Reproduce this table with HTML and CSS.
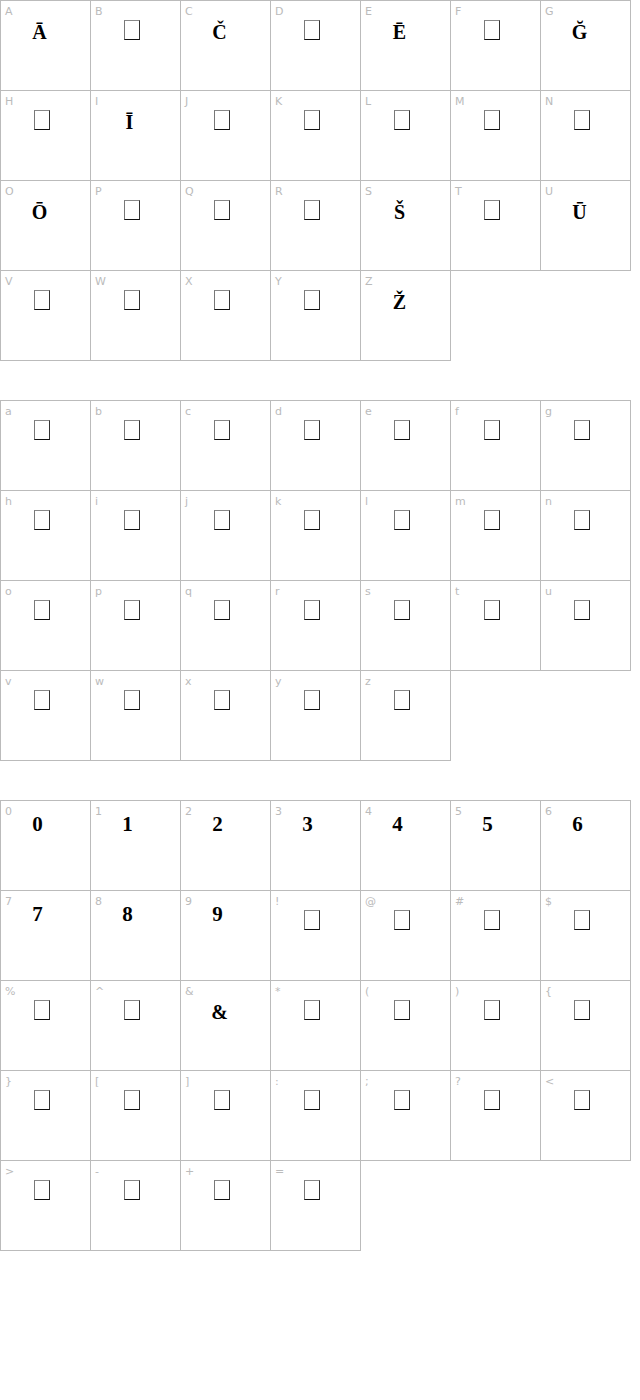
FILE: index.html
```html
<!DOCTYPE html>
<html>
<head>
<meta charset="utf-8">
<link rel="stylesheet" href="styles.css">
</head>
<body>
<div class="grid">
  <div class="cell"><div class="lbl">A</div><div class="gl ch">Ā</div></div>
  <div class="cell"><div class="lbl">B</div><div class="gl"><span class="tofu"></span></div></div>
  <div class="cell"><div class="lbl">C</div><div class="gl ch">Č</div></div>
  <div class="cell"><div class="lbl">D</div><div class="gl"><span class="tofu"></span></div></div>
  <div class="cell"><div class="lbl">E</div><div class="gl ch">Ē</div></div>
  <div class="cell"><div class="lbl">F</div><div class="gl"><span class="tofu"></span></div></div>
  <div class="cell"><div class="lbl">G</div><div class="gl ch">Ğ</div></div>
  <div class="cell"><div class="lbl">H</div><div class="gl"><span class="tofu"></span></div></div>
  <div class="cell"><div class="lbl">I</div><div class="gl ch">Ī</div></div>
  <div class="cell"><div class="lbl">J</div><div class="gl"><span class="tofu"></span></div></div>
  <div class="cell"><div class="lbl">K</div><div class="gl"><span class="tofu"></span></div></div>
  <div class="cell"><div class="lbl">L</div><div class="gl"><span class="tofu"></span></div></div>
  <div class="cell"><div class="lbl">M</div><div class="gl"><span class="tofu"></span></div></div>
  <div class="cell"><div class="lbl">N</div><div class="gl"><span class="tofu"></span></div></div>
  <div class="cell"><div class="lbl">O</div><div class="gl ch">Ō</div></div>
  <div class="cell"><div class="lbl">P</div><div class="gl"><span class="tofu"></span></div></div>
  <div class="cell"><div class="lbl">Q</div><div class="gl"><span class="tofu"></span></div></div>
  <div class="cell"><div class="lbl">R</div><div class="gl"><span class="tofu"></span></div></div>
  <div class="cell"><div class="lbl">S</div><div class="gl ch">Š</div></div>
  <div class="cell"><div class="lbl">T</div><div class="gl"><span class="tofu"></span></div></div>
  <div class="cell"><div class="lbl">U</div><div class="gl ch">Ū</div></div>
  <div class="cell"><div class="lbl">V</div><div class="gl"><span class="tofu"></span></div></div>
  <div class="cell"><div class="lbl">W</div><div class="gl"><span class="tofu"></span></div></div>
  <div class="cell"><div class="lbl">X</div><div class="gl"><span class="tofu"></span></div></div>
  <div class="cell"><div class="lbl">Y</div><div class="gl"><span class="tofu"></span></div></div>
  <div class="cell"><div class="lbl">Z</div><div class="gl ch">Ž</div></div>
</div>

<div class="grid">
  <div class="cell"><div class="lbl">a</div><div class="gl"><span class="tofu"></span></div></div>
  <div class="cell"><div class="lbl">b</div><div class="gl"><span class="tofu"></span></div></div>
  <div class="cell"><div class="lbl">c</div><div class="gl"><span class="tofu"></span></div></div>
  <div class="cell"><div class="lbl">d</div><div class="gl"><span class="tofu"></span></div></div>
  <div class="cell"><div class="lbl">e</div><div class="gl"><span class="tofu"></span></div></div>
  <div class="cell"><div class="lbl">f</div><div class="gl"><span class="tofu"></span></div></div>
  <div class="cell"><div class="lbl">g</div><div class="gl"><span class="tofu"></span></div></div>
  <div class="cell"><div class="lbl">h</div><div class="gl"><span class="tofu"></span></div></div>
  <div class="cell"><div class="lbl">i</div><div class="gl"><span class="tofu"></span></div></div>
  <div class="cell"><div class="lbl">j</div><div class="gl"><span class="tofu"></span></div></div>
  <div class="cell"><div class="lbl">k</div><div class="gl"><span class="tofu"></span></div></div>
  <div class="cell"><div class="lbl">l</div><div class="gl"><span class="tofu"></span></div></div>
  <div class="cell"><div class="lbl">m</div><div class="gl"><span class="tofu"></span></div></div>
  <div class="cell"><div class="lbl">n</div><div class="gl"><span class="tofu"></span></div></div>
  <div class="cell"><div class="lbl">o</div><div class="gl"><span class="tofu"></span></div></div>
  <div class="cell"><div class="lbl">p</div><div class="gl"><span class="tofu"></span></div></div>
  <div class="cell"><div class="lbl">q</div><div class="gl"><span class="tofu"></span></div></div>
  <div class="cell"><div class="lbl">r</div><div class="gl"><span class="tofu"></span></div></div>
  <div class="cell"><div class="lbl">s</div><div class="gl"><span class="tofu"></span></div></div>
  <div class="cell"><div class="lbl">t</div><div class="gl"><span class="tofu"></span></div></div>
  <div class="cell"><div class="lbl">u</div><div class="gl"><span class="tofu"></span></div></div>
  <div class="cell"><div class="lbl">v</div><div class="gl"><span class="tofu"></span></div></div>
  <div class="cell"><div class="lbl">w</div><div class="gl"><span class="tofu"></span></div></div>
  <div class="cell"><div class="lbl">x</div><div class="gl"><span class="tofu"></span></div></div>
  <div class="cell"><div class="lbl">y</div><div class="gl"><span class="tofu"></span></div></div>
  <div class="cell"><div class="lbl">z</div><div class="gl"><span class="tofu"></span></div></div>
</div>

<div class="grid">
  <div class="cell"><div class="lbl">0</div><div class="gl num">0</div></div>
  <div class="cell"><div class="lbl">1</div><div class="gl num">1</div></div>
  <div class="cell"><div class="lbl">2</div><div class="gl num">2</div></div>
  <div class="cell"><div class="lbl">3</div><div class="gl num">3</div></div>
  <div class="cell"><div class="lbl">4</div><div class="gl num">4</div></div>
  <div class="cell"><div class="lbl">5</div><div class="gl num">5</div></div>
  <div class="cell"><div class="lbl">6</div><div class="gl num">6</div></div>
  <div class="cell"><div class="lbl">7</div><div class="gl num">7</div></div>
  <div class="cell"><div class="lbl">8</div><div class="gl num">8</div></div>
  <div class="cell"><div class="lbl">9</div><div class="gl num">9</div></div>
  <div class="cell"><div class="lbl">!</div><div class="gl"><span class="tofu"></span></div></div>
  <div class="cell"><div class="lbl">@</div><div class="gl"><span class="tofu"></span></div></div>
  <div class="cell"><div class="lbl">#</div><div class="gl"><span class="tofu"></span></div></div>
  <div class="cell"><div class="lbl">$</div><div class="gl"><span class="tofu"></span></div></div>
  <div class="cell"><div class="lbl">%</div><div class="gl"><span class="tofu"></span></div></div>
  <div class="cell"><div class="lbl">^</div><div class="gl"><span class="tofu"></span></div></div>
  <div class="cell"><div class="lbl">&amp;</div><div class="gl ch">&amp;</div></div>
  <div class="cell"><div class="lbl">*</div><div class="gl"><span class="tofu"></span></div></div>
  <div class="cell"><div class="lbl">(</div><div class="gl"><span class="tofu"></span></div></div>
  <div class="cell"><div class="lbl">)</div><div class="gl"><span class="tofu"></span></div></div>
  <div class="cell"><div class="lbl">{</div><div class="gl"><span class="tofu"></span></div></div>
  <div class="cell"><div class="lbl">}</div><div class="gl"><span class="tofu"></span></div></div>
  <div class="cell"><div class="lbl">[</div><div class="gl"><span class="tofu"></span></div></div>
  <div class="cell"><div class="lbl">]</div><div class="gl"><span class="tofu"></span></div></div>
  <div class="cell"><div class="lbl">:</div><div class="gl"><span class="tofu"></span></div></div>
  <div class="cell"><div class="lbl">;</div><div class="gl"><span class="tofu"></span></div></div>
  <div class="cell"><div class="lbl">?</div><div class="gl"><span class="tofu"></span></div></div>
  <div class="cell"><div class="lbl">&lt;</div><div class="gl"><span class="tofu"></span></div></div>
  <div class="cell"><div class="lbl">&gt;</div><div class="gl"><span class="tofu"></span></div></div>
  <div class="cell"><div class="lbl">-</div><div class="gl"><span class="tofu"></span></div></div>
  <div class="cell"><div class="lbl">+</div><div class="gl"><span class="tofu"></span></div></div>
  <div class="cell"><div class="lbl">=</div><div class="gl"><span class="tofu"></span></div></div>
</div>
</body>
</html>
```
FILE: styles.css
```css
html, body {
  margin: 0;
  padding: 0;
  background: #fff;
}
.grid {
  display: grid;
  grid-template-columns: repeat(7, 90px);
  grid-auto-rows: 90px;
  margin-bottom: 40px;
  width: 631px;
}
.cell {
  box-sizing: border-box;
  width: 91px;
  height: 91px;
  border: 1px solid #bbb;
  padding: 4px 4px 0 4px;
}
.lbl {
  font-family: "DejaVu Sans", Verdana, sans-serif;
  font-size: 11px;
  line-height: 13px;
  height: 13px;
  color: #bbb;
}
.gl {
  box-sizing: border-box;
  margin: 2px 0 0 -4px;
  width: 81px;
  height: 24px;
  text-align: center;
  font-family: "Liberation Serif", "Times New Roman", serif;
  font-weight: bold;
  font-size: 20px;
  line-height: 24px;
  color: #000;
}
.ch {
  padding-right: 4px;
}
.num {
  margin-top: -6px;
  padding-right: 8px;
  font-size: 21px;
}
.tofu {
  display: inline-block;
  box-sizing: border-box;
  width: 16px;
  height: 20px;
  vertical-align: -1px;
  border-style: solid;
  border-width: 1px;
  border-color: #888 #333 #111 #777;
}
```
